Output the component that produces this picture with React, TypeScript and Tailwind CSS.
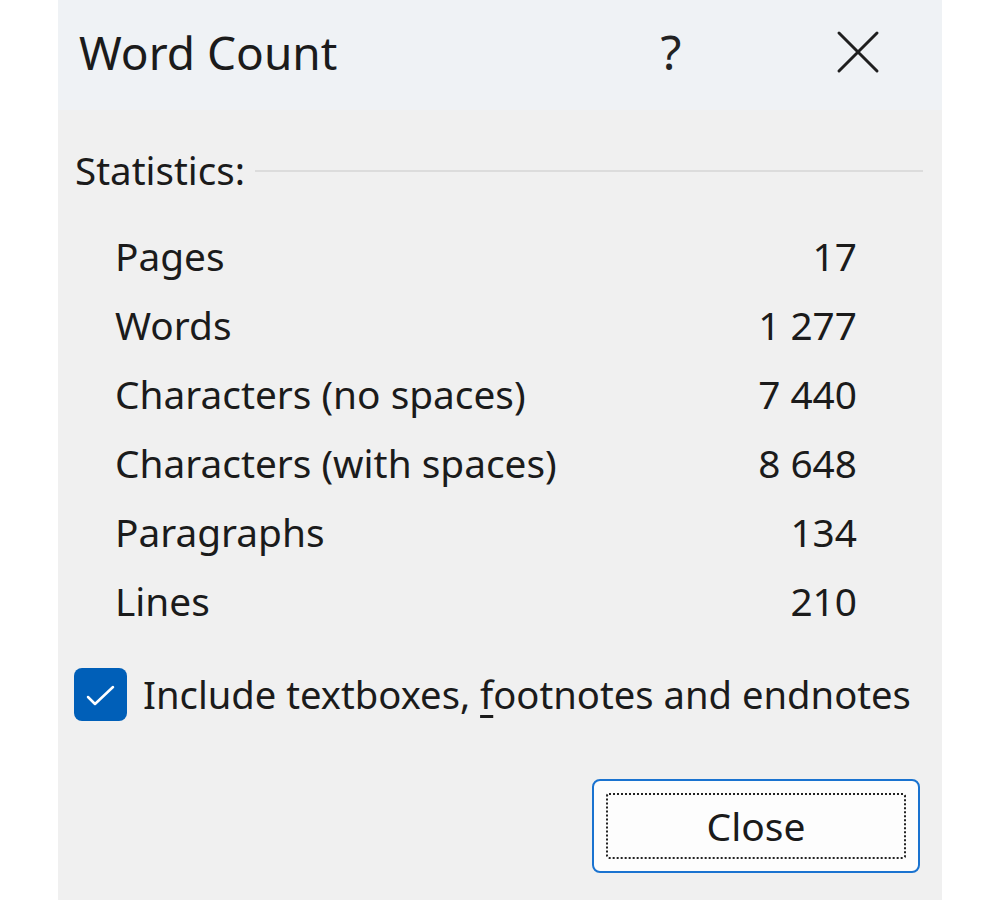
import React from "react";

const stats: { label: string; value: string }[] = [
  { label: "Pages", value: "17" },
  { label: "Words", value: "1 277" },
  { label: "Characters (no spaces)", value: "7 440" },
  { label: "Characters (with spaces)", value: "8 648" },
  { label: "Paragraphs", value: "134" },
  { label: "Lines", value: "210" },
];

const font = { fontFamily: '"Noto Sans", "Open Sans", sans-serif' };

export default function App() {
  return (
    <div className="w-[1000px] h-[900px] bg-white flex justify-center" style={font}>
      <div className="w-[884px] h-[900px] bg-[#f0f0f0] flex flex-col text-[#1b1b1b]">
        {/* title bar */}
        <div className="h-[110px] bg-[#eff2f5] flex items-center pl-[21px] pb-[6px]">
          <div className="text-[46px] leading-none flex-1">Word Count</div>
          <div className="w-[40px] flex justify-center text-[48px] leading-none text-[#222] mr-[145px]">?</div>
          <svg width="44" height="44" viewBox="0 0 44 44" className="mr-[62px]">
            <path d="M3 3 L41 41 M41 3 L3 41" stroke="#1f1f1f" strokeWidth="3" strokeLinecap="round" />
          </svg>
        </div>

        {/* statistics group */}
        <div className="flex items-center pl-[17px] pr-[19px] mt-[41px]">
          <span className="text-[38.5px] leading-none">Statistics:</span>
          <div className="flex-1 h-[2px] bg-[#dcdcdc] ml-[10px] mt-[2px]" />
        </div>

        <div className="flex flex-col pl-[57px] pr-[85px] mt-[32px]">
          {stats.map((s) => (
            <div key={s.label} className="h-[69px] flex items-center justify-between text-[38.8px]">
              <span>{s.label}</span>
              <span>{s.value}</span>
            </div>
          ))}
        </div>

        {/* include checkbox */}
        <div className="flex items-center pl-[16px] mt-[32px]">
          <div className="w-[53px] h-[53px] rounded-[8px] bg-[#005fb8] flex items-center justify-center">
            <svg width="53" height="53" viewBox="0 0 53 53">
              <path d="M14 29 L21 36 L39 19" fill="none" stroke="#ffffff" strokeWidth="2.5" strokeLinecap="round" strokeLinejoin="round" />
            </svg>
          </div>
          <span className="ml-[16px] text-[38.2px] leading-none">
            Include textboxes, <span className="underline underline-offset-[6px]">f</span>ootnotes and endnotes
          </span>
        </div>

        {/* close button */}
        <div className="flex justify-end pr-[22px] mt-[58px]">
          <button className="w-[328px] h-[94px] rounded-[8px] border-2 border-[#1a73d0] bg-[#fdfdfd] p-[12px]">
            <div className="w-full h-full border-2 border-dotted border-[#222] rounded-[3px] flex items-center justify-center text-[39px] leading-none text-[#1b1b1b]">
              Close
            </div>
          </button>
        </div>
      </div>
    </div>
  );
}
